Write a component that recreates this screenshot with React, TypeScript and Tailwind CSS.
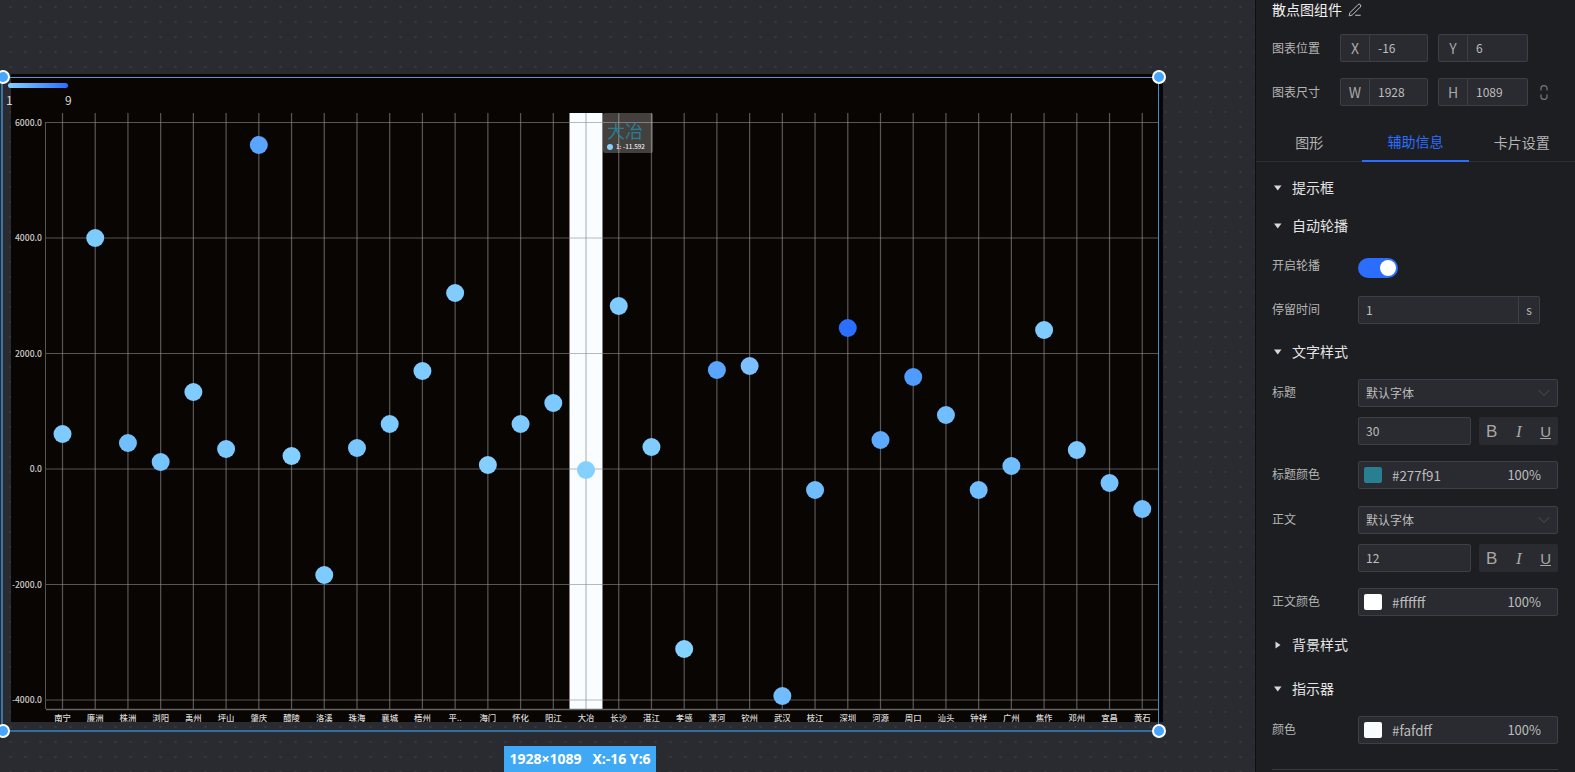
import React from "react";
import { ChevronDown, PenLine } from "lucide-react";

const FONT = '"Noto Sans CJK SC", sans-serif';
const pts: [string, number, string][] = [
  ["南宁", 434, "#7ecbff"], ["廉洲", 238, "#7ecbff"], ["株洲", 443, "#72bfff"], ["浏阳", 462, "#75c3ff"],
  ["禹州", 392, "#80ccff"], ["坪山", 449, "#7ac8ff"], ["肇庆", 145, "#5aa5ff"], ["醴陵", 456, "#83d0ff"],
  ["洛溪", 575, "#7ecbff"], ["珠海", 448, "#78c5ff"], ["襄城", 424, "#7dcaff"], ["梧州", 371, "#7ecbff"],
  ["平..", 293, "#80ccff"], ["海门", 465, "#84cfff"], ["怀化", 424, "#7ecaff"], ["阳江", 403, "#7ccaff"],
  ["大冶", 470, "#84d0ff"], ["长沙", 306, "#7fcaff"], ["湛江", 447, "#80ccff"], ["孝感", 649, "#85d1ff"],
  ["漯河", 370, "#5aa5ff"], ["钦州", 366, "#7cc0ff"], ["武汉", 696, "#70bcff"], ["枝江", 490, "#6fbcff"],
  ["深圳", 328, "#2a6fff"], ["河源", 440, "#5eaaff"], ["周口", 377, "#4f9bff"], ["汕头", 415, "#70bdff"],
  ["钟祥", 490, "#70beff"], ["广州", 466, "#70beff"], ["焦作", 330, "#7fcbff"], ["邓州", 450, "#7cc8ff"],
  ["宜昌", 483, "#76c3ff"], ["黄石", 509, "#72bfff"],
];
const xAt = (i: number) => 62.5 + i * 32.72;
const yTicks: [string, number][] = [
  ["6000.0", 122.5], ["4000.0", 238], ["2000.0", 353.5], ["0.0", 469], ["-2000.0", 584.5], ["-4000.0", 700],
];
const LINE = "rgba(140,140,140,0.6)";

function Chart() {
  return (
    <svg className="absolute left-[11px] top-[74px] w-[1152px] h-[648px]" viewBox="11 74 1152 648" style={{ fontFamily: FONT }}>
      <rect x="11" y="74" width="1152" height="648" fill="#080502" />
      <rect x="569.5" y="113" width="33" height="596" fill="#fafdff" />
      <line x1="45.5" x2="45.5" y1="122" y2="709" stroke={LINE} strokeWidth="1" />
      {pts.map((_, i) => (
        <line key={i} x1={xAt(i)} x2={xAt(i)} y1="113" y2="709" stroke={LINE} strokeWidth="1.25" />
      ))}
      {yTicks.map(([t, y]) => (
        <g key={t}>
          <line x1="46" x2="1158" y1={y} y2={y} stroke={LINE} strokeWidth="1.2" />
          <text x="42" y={y + 3} textAnchor="end" fontSize="8.6" fontWeight="500" fill="#cccccc">{t}</text>
        </g>
      ))}
      <line x1="46" x2="1158" y1="709.5" y2="709.5" stroke="#666" strokeWidth="1.5" />
      {pts.map(([n, y, c], i) => (
        <g key={n}>
          <circle cx={xAt(i)} cy={y} r="9" fill={c} />
          <text x={xAt(i)} y="720.5" textAnchor="middle" fontSize="8.4" fontWeight="500" fill="#d8d8d8">{n}</text>
        </g>
      ))}
    </svg>
  );
}

function Handle({ cls }: { cls: string }) {
  return <div className={`absolute w-[14px] h-[14px] rounded-full bg-[#46a6ff] border-2 border-white ${cls}`} />;
}

function Canvas() {
  return (
    <div className="relative flex-1 h-full overflow-hidden bg-[#2a2b30] bg-[radial-gradient(circle_at_10.5px_7px,#38393f_1px,transparent_1.3px)] bg-[length:15px_15px]">
      <Chart />
      <div className="absolute left-[8px] top-[83px] w-[60px] h-[5px] rounded-full bg-gradient-to-r from-[#84d0ff] to-[#2a6fff]" />
      <div className="absolute left-[6px] top-[93px] text-[12px] leading-[14px] text-[#d8d8d8]">1</div>
      <div className="absolute left-[65px] top-[93px] text-[12px] leading-[14px] text-[#d8d8d8]">9</div>
      <div className="absolute left-[603px] top-[113px] w-[50px] h-[40px] bg-[rgba(255,255,255,0.24)] rounded-[2px] pl-[4px]">
        <div className="text-[18px] leading-[22px] mt-[6px] text-[#277f91]">大冶</div>
        <div className="flex items-center gap-[3px] h-[9px] mt-[1px] text-[6.3px] leading-[9px] font-medium text-[#eeeeee] whitespace-pre">
          <span className="w-[6px] h-[6px] rounded-full bg-[#84d0ff]" />
          <span>{"1: -11.592"}</span>
        </div>
      </div>
      <div className="absolute left-[1px] top-[77px] w-[1158px] h-[655px] border-l-2 border-r-[1.5px] border-b-2 border-t border-t-[#4a9bd8] border-l-[#3a75a8] border-r-[#3f8cd8] border-b-[#2f6f9f]" />
      <Handle cls="left-[-4px] top-[70px]" />
      <Handle cls="left-[-4px] top-[724px]" />
      <Handle cls="left-[1152px] top-[70px]" />
      <Handle cls="left-[1152px] top-[724px]" />
      <div className="absolute left-[504px] top-[746px] w-[152px] h-[26px] bg-[#3fa9f5] text-white text-[14px] font-bold leading-[26px] text-center whitespace-pre" style={{ fontFamily: '"Noto Sans", sans-serif' }}>
        {"1928×1089   X:-16 Y:6"}
      </div>
    </div>
  );
}

function Arrow({ open = true }: { open?: boolean }) {
  return (
    <svg width="8" height="8" viewBox="0 0 8 8" className="shrink-0">
      {open ? <polygon points="0,1.5 7.5,1.5 3.75,6.5" fill="#d8d8d8" /> : <polygon points="1.5,0.5 6.5,4 1.5,7.5" fill="#d8d8d8" />}
    </svg>
  );
}

function Section({ title, open = true, cls }: { title: string; open?: boolean; cls: string }) {
  return (
    <div className={`flex items-center h-[20px] text-[14px] leading-[20px] text-[#e4e4e4] pl-[2px] gap-[10px] ${cls}`}>
      <Arrow open={open} />
      <span className="-mt-[2px]">{title}</span>
    </div>
  );
}

const BOX = "h-[28px] rounded-[2px] border border-[#3e3f44] bg-[#2a2b30] text-[12px] text-[#bdbdbd] flex items-center";

function Labeled({ label, cls, children }: { label: string; cls: string; children: React.ReactNode }) {
  return (
    <div className={`flex items-center ${cls}`}>
      <span className="w-[86px] text-[12px] text-[#b4b4b4] leading-[18px] -mt-[2px]">{label}</span>
      {children}
    </div>
  );
}

function Pair({ k, v, w }: { k: string; v: string; w: string }) {
  return (
    <div className={`${BOX} ${w}`}>
      <span className="w-[29px] h-full flex items-center justify-center border-r border-[#3e3f44] text-[14px] text-[#a8a8a8]">{k}</span>
      <span className="pl-[8px]">{v}</span>
    </div>
  );
}

function FontSelect() {
  return (
    <div className={`${BOX} w-[200px] pl-[7px] pr-[3px] justify-between`}>
      <span>默认字体</span>
      <ChevronDown size={20} strokeWidth={0.8} color="#62636a" />
    </div>
  );
}

function SizeRow({ v, cls }: { v: string; cls: string }) {
  return (
    <div className={`flex ml-[86px] gap-[8px] ${cls}`}>
      <div className={`${BOX} w-[113px] pl-[7px]`}>{v}</div>
      <div className="w-[79px] h-[28px] rounded-[2px] bg-[#2a2b30] flex items-center justify-between px-[7px] text-[17px] text-[#a8a8a8]" style={{ fontFamily: '"Liberation Sans", sans-serif' }}>
        <span className="leading-none">B</span>
        <span className="italic leading-none" style={{ fontFamily: '"Liberation Serif", serif' }}>I</span>
        <span className="underline leading-none text-[15px]">U</span>
      </div>
    </div>
  );
}

function ColorRow({ label, color, text, cls }: { label: string; color: string; text: string; cls: string }) {
  return (
    <Labeled label={label} cls={cls}>
      <div className={`${BOX} w-[200px] pl-[5px] pr-[16px]`}>
        <span className="w-[18px] h-[16px] rounded-[2px]" style={{ background: color }} />
        <span className="ml-[10px] text-[13.4px] flex-1">{text}</span>
        <span className="text-[13px]">100%</span>
      </div>
    </Labeled>
  );
}

function Panel() {
  return (
    <aside className="w-[320px] h-full shrink-0 border-l border-[#0e0f11] bg-[#1d1e21] overflow-hidden">
      <div className="pl-[16px] pr-[17px]">
        <div className="flex items-center h-[20px] text-[14px] leading-[20px] text-[#f0f0f0] gap-[6px]">
          <span className="-mt-[2px]">散点图组件</span>
          <PenLine size={14} strokeWidth={1.4} color="#e8e8e8" />
        </div>
        <div className="flex items-center mt-[14px]">
          <span className="w-[68px] text-[12px] text-[#b4b4b4]">图表位置</span>
          <Pair k="X" v="-16" w="w-[88px]" />
          <span className="w-[10px]" />
          <Pair k="Y" v="6" w="w-[90px]" />
        </div>
        <div className="flex items-center mt-[16px]">
          <span className="w-[68px] text-[12px] text-[#b4b4b4]">图表尺寸</span>
          <Pair k="W" v="1928" w="w-[88px]" />
          <span className="w-[10px]" />
          <Pair k="H" v="1089" w="w-[90px]" />
          <svg width="8" height="15" viewBox="0 0 8 15" className="ml-[12px]" fill="none" stroke="#77787d" strokeWidth="1.2">
            <path d="M1 5.5V3a3 2.4 0 0 1 6 0v2.5" />
            <path d="M1 9.5V12a3 2.4 0 0 0 6 0V9.5" />
          </svg>
        </div>
      </div>
      <div className="grid grid-cols-3 h-[40px] mt-[16px] border-b border-[#2e2f33] text-[14px] text-[#b4b4b4]">
        <div className="flex items-center justify-center h-[40px]">图形</div>
        <div className="flex items-center justify-center h-[40px] text-[#2b6dff] border-b-2 border-[#2b6dff]">辅助信息</div>
        <div className="flex items-center justify-center h-[40px]">卡片设置</div>
      </div>
      <div className="pl-[16px] pr-[17px]">
        <Section title="提示框" cls="mt-[16px]" />
        <Section title="自动轮播" cls="mt-[18px]" />
        <div className="flex items-center mt-[22px]">
          <span className="w-[86px] text-[12px] text-[#b4b4b4] leading-[18px] -mt-[7px]">开启轮播</span>
          <div className="w-[40px] h-[20px] rounded-full bg-[#2b6dff] flex items-center justify-end pr-[2px]">
            <span className="w-[16px] h-[16px] rounded-full bg-white" />
          </div>
        </div>
        <Labeled label="停留时间" cls="mt-[18px]">
          <div className={`${BOX} w-[182px]`}>
            <span className="flex-1 pl-[7px]">1</span>
            <span className="w-[21px] h-full flex items-center justify-center border-l border-[#3e3f44]">s</span>
          </div>
        </Labeled>
        <Section title="文字样式" cls="mt-[18px]" />
        <Labeled label="标题" cls="mt-[17px]"><FontSelect /></Labeled>
        <SizeRow v="30" cls="mt-[10px]" />
        <ColorRow label="标题颜色" color="#277f91" text="#277f91" cls="mt-[16px]" />
        <Labeled label="正文" cls="mt-[17px]"><FontSelect /></Labeled>
        <SizeRow v="12" cls="mt-[10px]" />
        <ColorRow label="正文颜色" color="#ffffff" text="#ffffff" cls="mt-[16px]" />
        <Section title="背景样式" open={false} cls="mt-[19px]" />
        <Section title="指示器" cls="mt-[24px]" />
        <ColorRow label="颜色" color="#fafdff" text="#fafdff" cls="mt-[17px]" />
        <div className="mt-[25px] h-px bg-[#3a3b3f]" />
      </div>
    </aside>
  );
}

export default function App() {
  return (
    <div className="flex w-[1575px] h-[772px] overflow-hidden" style={{ fontFamily: FONT }}>
      <Canvas />
      <Panel />
    </div>
  );
}
